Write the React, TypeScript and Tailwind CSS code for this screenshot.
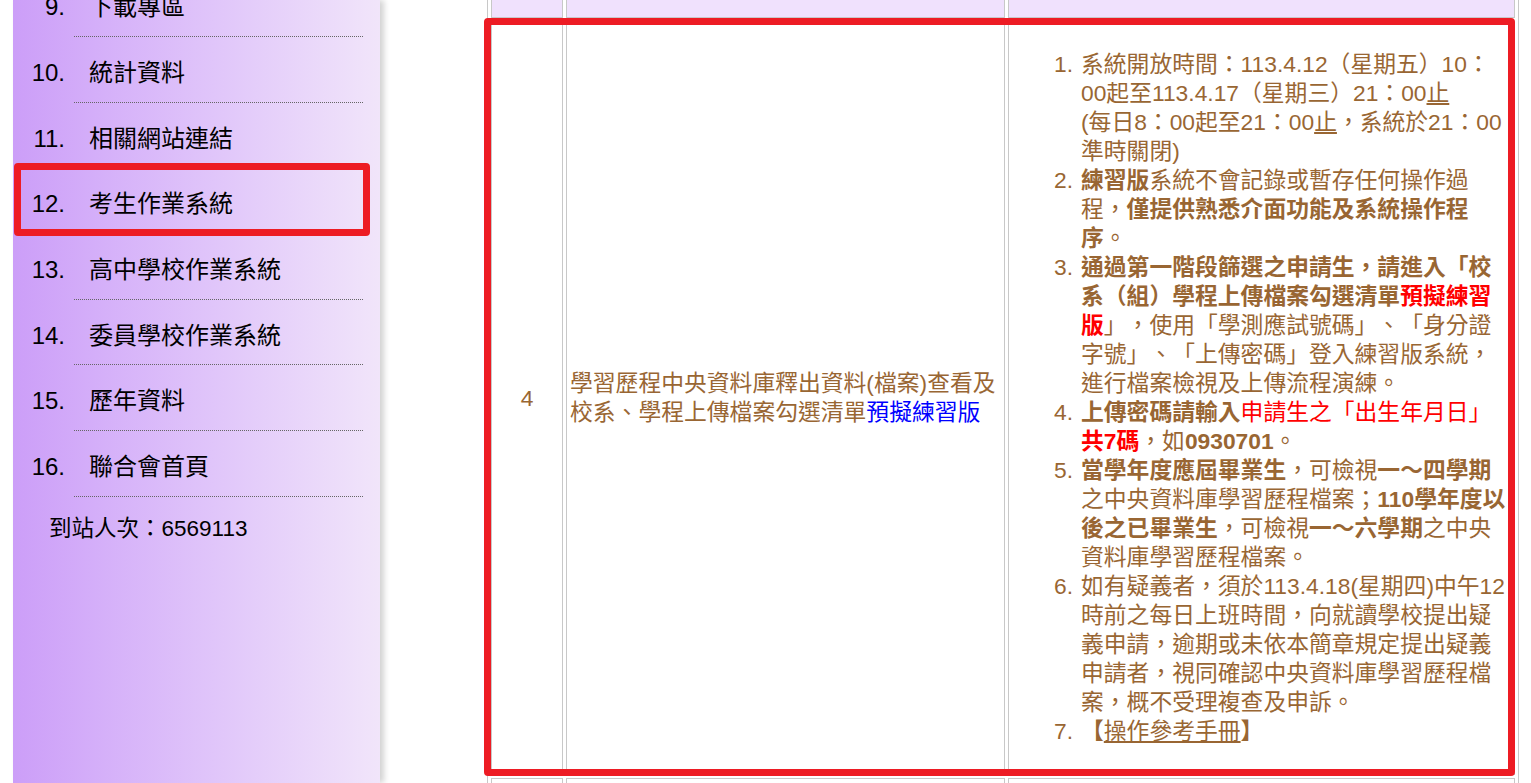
const menuItems = [
  { no: 9, label: "下載專區" },
  { no: 10, label: "統計資料" },
  { no: 11, label: "相關網站連結" },
  { no: 12, label: "考生作業系統" },
  { no: 13, label: "高中學校作業系統" },
  { no: 14, label: "委員學校作業系統" },
  { no: 15, label: "歷年資料" },
  { no: 16, label: "聯合會首頁" },
];

const Red = ({ children }: { children: React.ReactNode }) => (
  <span className="text-[#ff0000]">{children}</span>
);

const notes: React.ReactNode[] = [
  <>
    系統開放時間：113.4.12（星期五）10：00起至113.4.17（星期三）21：00<u>止</u>
    <br />
    (每日8：00起至21：00<u>止</u>，系統於21：00準時關閉)
  </>,
  <>
    <b>練習版</b>系統不會記錄或暫存任何操作過程，<b>僅提供熟悉介面功能及系統操作程序</b>。
  </>,
  <>
    <b>
      通過第一階段篩選之申請生，請進入「校系（組）學程上傳檔案勾選清單<Red>預擬練習版</Red>
    </b>
    」，使用「學測應試號碼」、「身分證字號」、「上傳密碼」登入練習版系統，進行檔案檢視及上傳流程演練。
  </>,
  <>
    <b>上傳密碼請輸入</b>
    <Red>
      申請生之「出生年月日」<b>共7碼</b>
    </Red>
    ，如<b>0930701</b>。
  </>,
  <>
    <b>當學年度應屆畢業生</b>，可檢視<b>一～四學期</b>之中央資料庫學習歷程檔案；
    <b>110學年度以後之已畢業生</b>，可檢視<b>一～六學期</b>之中央資料庫學習歷程檔案。
  </>,
  <>
    如有疑義者，須於113.4.18(星期四)中午12時前之每日上班時間，向就讀學校提出疑義申請，逾期或未依本簡章規定提出疑義申請者，視同確認中央資料庫學習歷程檔案，概不受理複查及申訴。
  </>,
  <>
    <b>【</b>
    <u>操作參考手冊</u>
    <b>】</b>
  </>,
];

const Sidebar = () => {
  return (
    <aside className="relative z-10 ml-[13px] w-[367px] shrink-0 bg-linear-to-r from-[#cc9ef8] to-[#f1e5fa] shadow-[4px_0_6px_rgba(0,0,0,0.18)]">
      <ol className="-mt-[28.7px]">
        {menuItems.map((item) => (
          <li key={item.no} className="relative flex text-[24px] leading-[36px] text-black">
            <span className="w-[52px] shrink-0 pt-[18px] text-right">{item.no}.</span>
            <div className="ml-[9px] h-[65.7px] w-[289px] border-b border-dotted border-[#666] pt-[18px] pl-[15px]">
              {item.label}
            </div>
            {item.no === 12 && (
              <span className="pointer-events-none absolute -top-[5px] left-[1px] h-[73px] w-[356px] rounded-[4px] border-[7px] border-[#ed1c24]" />
            )}
          </li>
        ))}
      </ol>
      <p className="mt-[17px] pl-[36px] text-[22.5px] leading-[29px] text-black">到站人次：6569113</p>
    </aside>
  );
};

const App = () => {
  return (
    <div
      lang="zh-Hant"
      className="flex h-[783px] overflow-hidden bg-white font-['Liberation_Sans','Noto_Sans_CJK_TC',sans-serif] [text-spacing-trim:space-all]"
    >
      <Sidebar />

      <main className="relative flex-1 text-[22.8px] leading-[29px] text-[#996633]">
        <table className="-mt-[26px] ml-[107px] w-[1032px] table-fixed border-separate border-spacing-[3px] border border-[#c8c8c8]">
          <colgroup>
            <col className="w-[72px]" />
            <col className="w-[439px]" />
            <col className="w-[507px]" />
          </colgroup>
          <tbody>
            <tr>
              <td className="h-[40px] border border-[#c8c8c8] bg-[#f0e1fd]" />
              <td className="h-[40px] border border-[#c8c8c8] bg-[#f0e1fd]" />
              <td className="h-[40px] border border-[#c8c8c8] bg-[#f0e1fd]" />
            </tr>
            <tr>
              <td className="border border-[#c8c8c8] text-center align-middle">4</td>
              <td className="border border-[#c8c8c8] pl-[3px] pr-[2px] align-middle">
                學習歷程中央資料庫釋出資料(檔案)查看及校系、學程上傳檔案勾選清單
                <span className="text-[#0000ff]">預擬練習版</span>
              </td>
              <td className="border border-[#c8c8c8] pt-[28px] pb-[28px] pl-[8px] pr-[6px] align-middle">
                <ol>
                  {notes.map((note, i) => (
                    <li key={i} className="flex">
                      <span className="w-[64px] shrink-0 pr-[8px] text-right">{i + 1}.</span>
                      <div className="min-w-0 flex-1">{note}</div>
                    </li>
                  ))}
                </ol>
              </td>
            </tr>
            <tr>
              <td className="h-[40px] border border-[#c8c8c8]" />
              <td className="h-[40px] border border-[#c8c8c8]" />
              <td className="h-[40px] border border-[#c8c8c8]" />
            </tr>
          </tbody>
        </table>

        {/* highlight frame round the row */}
        <span className="pointer-events-none absolute left-[104px] top-[18px] h-[758px] w-[1031px] rounded-[4px] border-[7px] border-[#ed1c24]" />
      </main>
    </div>
  );
};

export default App;
